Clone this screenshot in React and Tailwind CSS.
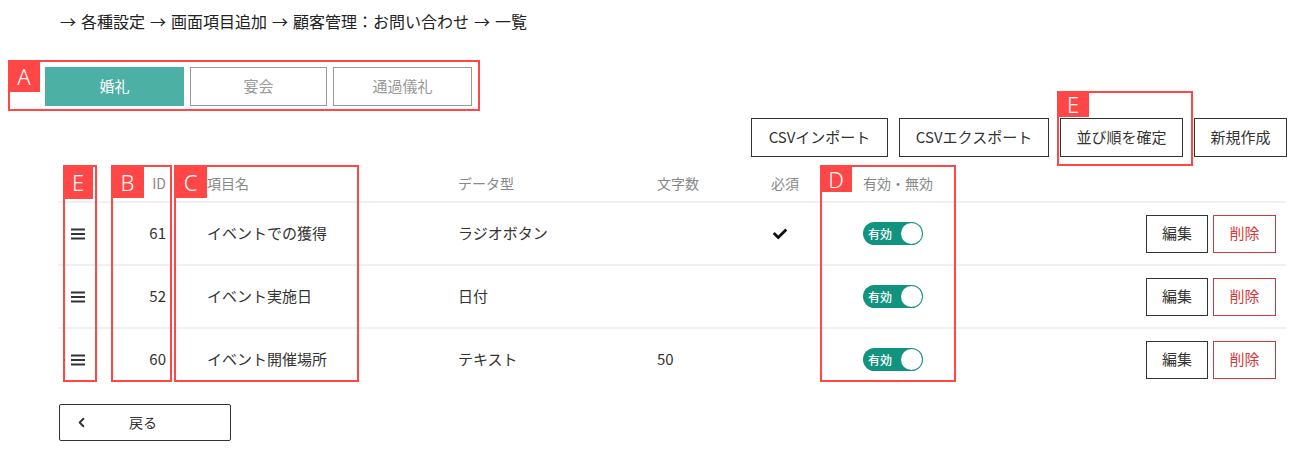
import React from "react";
import { FaCheck } from "react-icons/fa";
import { ChevronLeft } from "lucide-react";

const rows = [
  { id: 61, name: "イベントでの獲得", type: "ラジオボタン", len: "", required: true },
  { id: 52, name: "イベント実施日", type: "日付", len: "", required: false },
  { id: 60, name: "イベント開催場所", type: "テキスト", len: "50", required: false },
];

const crumbs = ["各種設定", "画面項目追加", "顧客管理：お問い合わせ", "一覧"];

const notes = [
  { key: "A", box: "left-[8px] top-[60px] w-[472px] h-[51px]", label: "w-[32px] h-[32px]" },
  { key: "E", box: "left-[1057px] top-[91px] w-[136px] h-[75px]", label: "w-[32px] h-[26px]" },
  { key: "E", box: "left-[63px] top-[165px] w-[34px] h-[217px]", label: "w-full h-[34px]" },
  { key: "B", box: "left-[111px] top-[165px] w-[61px] h-[217px]", label: "w-[33px] h-[33px]" },
  { key: "C", box: "left-[174px] top-[165px] w-[185px] h-[217px]", label: "w-[33px] h-[33px]" },
  { key: "D", box: "left-[820px] top-[165px] w-[136px] h-[217px]", label: "w-[32px] h-[27px]" },
];

function Handle() {
  return (
    <svg width="14" height="12" viewBox="0 0 14 12">
      <rect x="0" y="0.5" width="14" height="2" fill="#333" />
      <rect x="0" y="5" width="14" height="2" fill="#333" />
      <rect x="0" y="9.5" width="14" height="2" fill="#333" />
    </svg>
  );
}

function Toggle() {
  return (
    <div className="flex items-center justify-between w-[60px] h-[23px] rounded-full bg-[#12937f] pl-[5px] pr-[1px]">
      <span className="text-[12px] leading-none text-white font-medium">有効</span>
      <span className="w-[21px] h-[21px] rounded-full bg-white"></span>
    </div>
  );
}

export default function App() {
  return (
    <div
      className="relative w-[1293px] h-[450px] bg-white text-[#333] overflow-hidden"
      style={{ fontFamily: '"Noto Sans CJK JP", "Noto Sans", sans-serif' }}
    >
      <div className="flex items-center pl-[60px] pt-[9px] h-[32px] text-[16px] leading-[22px] text-[#222]">
        {crumbs.map((c, i) => (
          <React.Fragment key={i}>
            <span className={i === 0 ? "mr-[5px]" : "mx-[5px]"}>→</span>
            <span>{c}</span>
          </React.Fragment>
        ))}
      </div>

      {/* tabs */}
      <div className="flex gap-[6px] pl-[45px] mt-[35px]">
        <div className="w-[139px] h-[39px] flex items-center justify-center bg-[#4cb0a5] text-white text-[15px]">婚礼</div>
        <div className="w-[137px] h-[39px] flex items-center justify-center border border-[#999] text-[#999] text-[15px]">宴会</div>
        <div className="w-[139px] h-[39px] flex items-center justify-center border border-[#999] text-[#999] text-[15px]">通過儀礼</div>
      </div>

      {/* actions */}
      <div className="flex justify-end gap-[11px] pr-[6px] mt-[12px]">
        <button className="h-[39px] w-[137px] border border-[#333] text-[15px]">CSVインポート</button>
        <button className="h-[39px] w-[150px] border border-[#333] text-[15px]">CSVエクスポート</button>
        <button className="h-[39px] w-[123px] border border-[#333] text-[15px]">並び順を確定</button>
        <button className="h-[39px] w-[93px] border border-[#333] text-[15px]">新規作成</button>
      </div>

      {/* table */}
      <div className="ml-[58px] w-[1228px] mt-[8px]">
        <div className="flex items-center h-[36px] text-[14px] text-[#888]">
          <div className="w-[40px]"></div>
          <div className="w-[69px] text-right pr-[1px]">ID</div>
          <div className="w-[291px] pl-[40px]">項目名</div>
          <div className="w-[199px]">データ型</div>
          <div className="w-[114px]">文字数</div>
          <div className="w-[92px]">必須</div>
          <div className="w-[150px]">有効・無効</div>
        </div>
        {rows.map((r) => (
          <div key={r.id} className="flex items-center h-[63px] border-t-2 border-[#f0f0f0] text-[15px]">
            <div className="w-[40px] flex justify-center"><Handle /></div>
            <div className="w-[69px] text-right pr-[1px]">{r.id}</div>
            <div className="w-[291px] pl-[40px]">{r.name}</div>
            <div className="w-[199px]">{r.type}</div>
            <div className="w-[114px]">{r.len}</div>
            <div className="w-[92px] pl-[2px]">{r.required && <FaCheck size={14} color="#111" />}</div>
            <div className="w-[283px]"><Toggle /></div>
            <div className="flex-1 flex justify-end gap-[5px] pr-[10px]">
              <button className="w-[62px] h-[38px] border border-[#333] text-[15px]">編集</button>
              <button className="w-[63px] h-[38px] border border-[#d23a3a] text-[#d23a3a] text-[15px]">削除</button>
            </div>
          </div>
        ))}
      </div>

      {/* back */}
      <div className="pl-[59px] mt-[14px]">
        <button className="relative w-[172px] h-[37px] border border-[#333] rounded-[2px] text-[14px] flex items-center">
          <ChevronLeft size={15} strokeWidth={3} className="ml-[14px]" />
          <span className="ml-[40px]">戻る</span>
        </button>
      </div>

      {/* annotations */}
      {notes.map((n, i) => (
        <div key={i} className={`absolute border-2 border-[#ff4747] ${n.box}`}>
          <div
            className={`absolute -left-[2px] -top-[2px] bg-[#ff4747] text-white text-[22px] font-light flex items-center justify-center leading-none ${n.label}`}
            style={{ fontFamily: '"Noto Sans", sans-serif' }}
          >
            {n.key}
          </div>
        </div>
      ))}
    </div>
  );
}
